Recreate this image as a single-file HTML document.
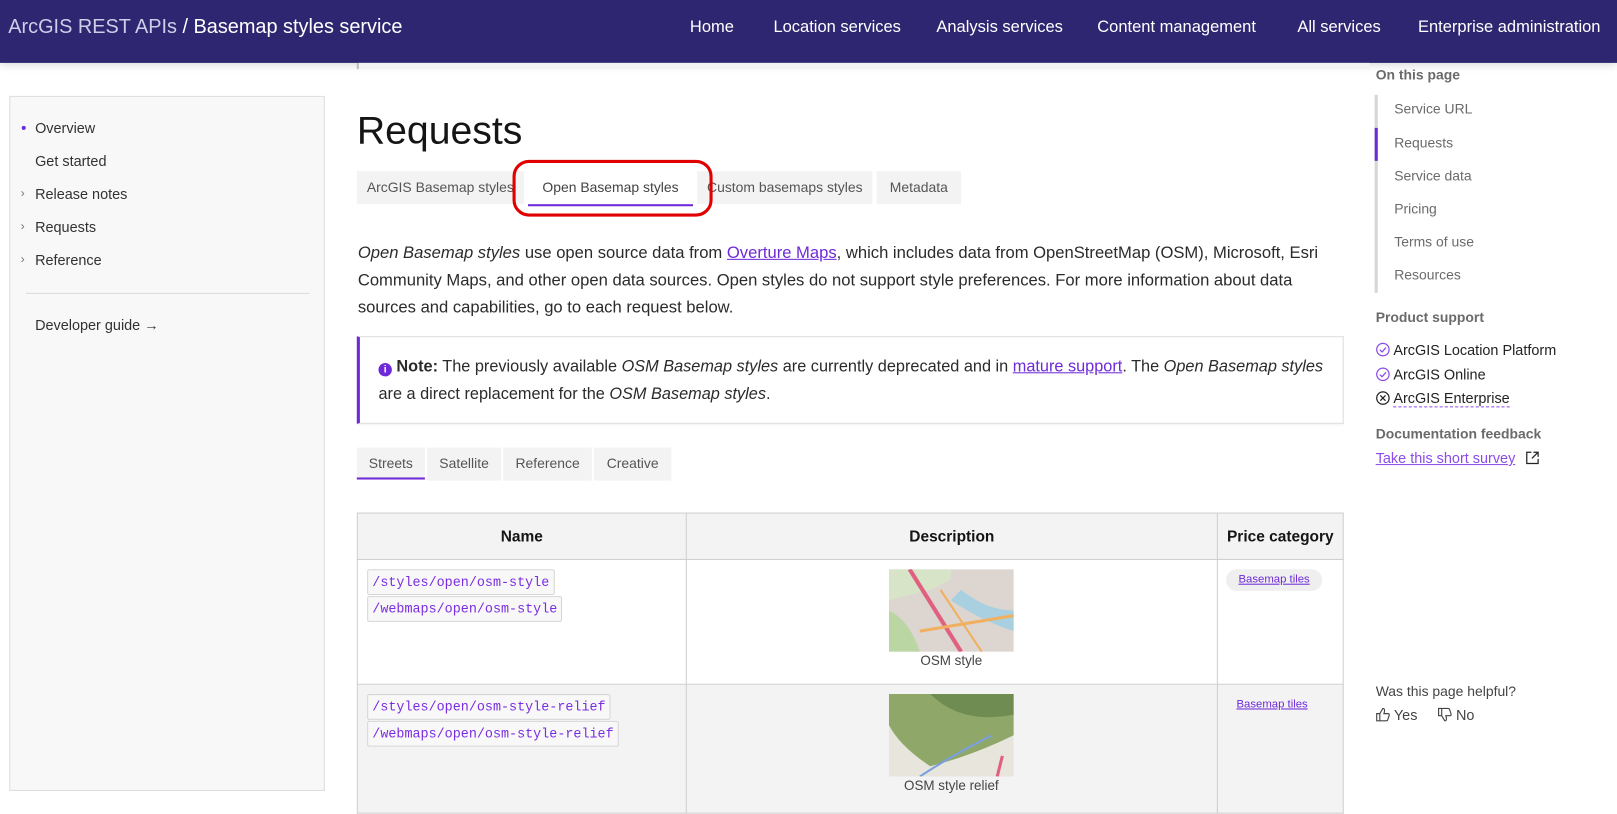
<!DOCTYPE html>
<html><head><meta charset="utf-8"><style>
*{box-sizing:border-box;margin:0;padding:0}
html,body{width:1617px;height:814px;overflow:hidden;background:#fff}
body{font-family:"Liberation Sans",sans-serif;color:#151515;position:relative}
#w{position:absolute;left:0;top:0;width:1568px;height:790px;transform:scale(1.03125);transform-origin:0 0}
.hdr{position:absolute;left:0;top:0;width:1568px;height:61px;background:#2e2670;color:#fff;box-shadow:0 2px 8px rgba(0,0,0,.15)}
.hdr .t{position:absolute;left:8px;top:16px;font-size:19.3px;color:#fff}
.hdr .t span{color:#d0cde8}
.nav{position:absolute;top:18px;font-size:16px;color:#fff}
.abs{position:absolute}
.side{position:absolute;left:9px;top:93px;width:306px;height:674px;background:#f8f8f8;border:1px solid #dedede}
.side div{position:absolute;left:24px;font-size:14px;color:#323232}
.car{position:absolute;left:-14px;color:#777;font-size:12px}
.tab{position:absolute;height:32px;background:#f3f3f3;font-size:13.5px;color:#555;text-align:center;line-height:32px}
p.b{font-size:16.1px;line-height:26.5px;color:#2b2b2b}
a{color:#6e2ad8;text-decoration:underline}
.rt{position:absolute;left:1352px;font-size:13.5px;color:#6a6a6a}
.code{position:absolute;font-family:"Liberation Mono",monospace;font-size:13px;color:#7a2de0;border:1px solid #d6d6d6;background:#f8f8f8;border-radius:2px;padding:0 4px;height:25px;line-height:24px}
table{border-collapse:collapse}
</style></head><body><div id="w">
<div class="hdr"><div class="t"><span>ArcGIS REST APIs</span> / Basemap styles service</div>
<div class="nav" style="left:669px">Home</div>
<div class="nav" style="left:750px">Location services</div>
<div class="nav" style="left:908px">Analysis services</div>
<div class="nav" style="left:1064px">Content management</div>
<div class="nav" style="left:1258px">All services</div>
<div class="nav" style="left:1375px">Enterprise administration</div>
</div>
<div class="abs" style="left:346px;top:61px;width:2px;height:6px;background:#bbb"></div>
<div class="abs" style="left:348px;top:61px;width:980px;height:6px;background:#f3f3f3"></div>

<div class="side">
<div style="top:22px"><span class="abs" style="left:-13px;top:6px;width:4px;height:4px;border-radius:2px;background:#6e2ad8"></span>Overview</div>
<div style="top:54px">Get started</div>
<div style="top:86px"><span class="car">›</span>Release notes</div>
<div style="top:118px"><span class="car">›</span>Requests</div>
<div style="top:150px"><span class="car">›</span>Reference</div>
<span class="abs" style="left:15px;top:190px;width:275px;height:1px;background:#dcdcdc"></span>
<div style="top:213px">Developer guide →</div>
</div>

<div class="abs" style="left:346px;top:106px;font-size:38px;color:#151515">Requests</div>
<div class="tab" style="left:346px;top:166px;width:162px">ArcGIS Basemap styles</div>
<div class="tab" style="left:512px;top:166px;width:160px;background:#fff;color:#444;border-bottom:2px solid #6e2ad8;height:34px">Open Basemap styles</div>
<div class="tab" style="left:676px;top:166px;width:170px">Custom basemaps styles</div>
<div class="tab" style="left:850px;top:166px;width:82px">Metadata</div>
<div class="abs" style="left:497px;top:155px;width:194px;height:55px;border:3.5px solid #e00000;border-radius:16px"></div>

<p class="b abs" style="left:347px;top:232px;width:960px"><i>Open Basemap styles</i> use open source data from <a>Overture Maps</a>, which includes data from OpenStreetMap (OSM), Microsoft, Esri Community Maps, and other open data sources. Open styles do not support style preferences. For more information about data sources and capabilities, go to each request below.</p>

<div class="abs" style="left:346px;top:326px;width:957px;height:85px;border:1px solid #dedede;border-left:3px solid #6e2ad8;box-shadow:0 1px 2px rgba(0,0,0,.06)">
<p class="b" style="position:absolute;left:18px;top:16px;width:930px;font-size:15.8px"><span style="display:inline-block;width:13px;height:13px;border-radius:7px;background:#6e2ad8;color:#fff;font-size:10px;line-height:13px;text-align:center;font-weight:bold;vertical-align:-1px">i</span> <b>Note:</b> The previously available <i>OSM Basemap styles</i> are currently deprecated and in <a>mature support</a>. The <i>Open Basemap styles</i> are a direct replacement for the <i>OSM Basemap styles</i>.</p>
</div>

<div class="tab" style="left:346px;top:434px;width:66px;border-bottom:2px solid #6e2ad8;height:31px">Streets</div>
<div class="tab" style="left:414px;top:434px;width:72px">Satellite</div>
<div class="tab" style="left:488px;top:434px;width:86px">Reference</div>
<div class="tab" style="left:576px;top:434px;width:75px">Creative</div>

<table class="abs" style="left:346px;top:497px;width:957px;font-size:14px">
<tr style="height:45px;background:#f3f3f3"><th style="border:1px solid #cfcfcf;width:319px;font-size:15px">Name</th><th style="border:1px solid #cfcfcf;width:515px;font-size:15px">Description</th><th style="border:1px solid #cfcfcf;font-size:15px">Price category</th></tr>
<tr style="height:121px"><td style="border:1px solid #cfcfcf"></td><td style="border:1px solid #cfcfcf"></td><td style="border:1px solid #cfcfcf"></td></tr>
<tr style="height:125px;background:#f3f3f3"><td style="border:1px solid #cfcfcf"></td><td style="border:1px solid #cfcfcf"></td><td style="border:1px solid #cfcfcf"></td></tr>
</table>
<div class="code" style="left:356px;top:552px">/styles/open/osm-style</div>
<div class="code" style="left:356px;top:578px">/webmaps/open/osm-style</div>
<div class="code" style="left:356px;top:673px">/styles/open/osm-style-relief</div>
<div class="code" style="left:356px;top:699px">/webmaps/open/osm-style-relief</div>
<svg class="abs" style="left:862px;top:552px" width="121" height="80"><rect width="121" height="80" fill="#ddd5cf"/><path d="M0 30 L40 20 L60 10 V0 H0Z" fill="#d7e4c8"/><path d="M0 40 Q20 50 30 80 H0Z" fill="#b9d6a3"/><path d="M60 30 Q90 50 121 60 V40 Q95 40 70 20Z" fill="#a9d0e0"/><path d="M20 0 L70 80" stroke="#e06080" stroke-width="4"/><path d="M30 60 L121 45" stroke="#f0b060" stroke-width="3"/><path d="M50 20 L90 80" stroke="#f0b060" stroke-width="2"/></svg>
<div class="abs" style="left:862px;top:633px;width:121px;text-align:center;font-size:13px;color:#444">OSM style</div>
<svg class="abs" style="left:862px;top:673px" width="121" height="80"><rect width="121" height="80" fill="#e8e6dc"/><path d="M0 0 H121 V40 Q80 60 40 70 Q10 50 0 30Z" fill="#8fa86a"/><path d="M40 0 Q70 30 121 20 V0Z" fill="#6f8c52"/><path d="M30 80 Q60 60 100 40" stroke="#7aa0e0" stroke-width="2" fill="none"/><path d="M110 60 L105 80" stroke="#e06080" stroke-width="3"/></svg>
<div class="abs" style="left:862px;top:754px;width:121px;text-align:center;font-size:13px;color:#444">OSM style relief</div>
<div class="abs" style="left:1189px;top:552px;width:93px;height:21px;border-radius:10px;background:#efefef;font-size:11px;line-height:21px;text-align:center"><a>Basemap tiles</a></div>
<div class="abs" style="left:1199px;top:677px;font-size:11px"><a>Basemap tiles</a></div>

<div class="abs" style="left:1334px;top:65px;font-size:13.5px;font-weight:bold;color:#6a6a6a">On this page</div>
<div class="abs" style="left:1333px;top:92px;width:3px;height:192px;background:#d6d6d6"></div>
<div class="abs" style="left:1333px;top:124px;width:3px;height:32px;background:#6e2ad8"></div>
<div class="rt" style="top:98px">Service URL</div>
<div class="rt" style="top:131px">Requests</div>
<div class="rt" style="top:163px">Service data</div>
<div class="rt" style="top:195px">Pricing</div>
<div class="rt" style="top:227px">Terms of use</div>
<div class="rt" style="top:259px">Resources</div>
<div class="abs" style="left:1334px;top:300px;font-size:13.5px;font-weight:bold;color:#6a6a6a">Product support</div>
<div class="abs" style="left:1334px;top:328px;font-size:14px;color:#222;line-height:23.5px">
<div><svg width="14" height="14" style="vertical-align:-2px"><circle cx="7" cy="7" r="6" fill="none" stroke="#8b4be8" stroke-width="1.2"/><path d="M4 7.2 L6.2 9.3 L10 5" fill="none" stroke="#8b4be8" stroke-width="1.2"/></svg> ArcGIS Location Platform</div>
<div><svg width="14" height="14" style="vertical-align:-2px"><circle cx="7" cy="7" r="6" fill="none" stroke="#8b4be8" stroke-width="1.2"/><path d="M4 7.2 L6.2 9.3 L10 5" fill="none" stroke="#8b4be8" stroke-width="1.2"/></svg> ArcGIS Online</div>
<div><svg width="14" height="14" style="vertical-align:-2px"><circle cx="7" cy="7" r="6" fill="none" stroke="#222" stroke-width="1.2"/><path d="M4.5 4.5 L9.5 9.5 M9.5 4.5 L4.5 9.5" stroke="#222" stroke-width="1.2"/></svg> <span style="border-bottom:1px dashed #8b4be8">ArcGIS Enterprise</span></div>
</div>
<div class="abs" style="left:1334px;top:413px;font-size:13.5px;font-weight:bold;color:#6a6a6a">Documentation feedback</div>
<div class="abs" style="left:1334px;top:436px;font-size:14px"><a style="color:#8b4be8">Take this short survey</a> <svg width="14" height="14" style="vertical-align:-2px;margin-left:6px"><path d="M6 1.5 H1.5 V12.5 H12.5 V8 M8 1.5 H12.5 V6 M12.5 1.5 L6.5 7.5" fill="none" stroke="#222" stroke-width="1.2"/></svg></div>
<div class="abs" style="left:1334px;top:663px;font-size:13.5px;color:#444">Was this page helpful?</div>
<div class="abs" style="left:1334px;top:685px;font-size:14px;color:#444"><svg width="14" height="14" style="vertical-align:-2px"><path d="M1 6 H4 V13 H1Z M4 6 L7 1 Q9 1 8.5 4 L8 6 H12.5 Q13.5 6.5 13 8 L11.5 12.5 Q11 13 10 13 H4" fill="none" stroke="#444" stroke-width="1.1"/></svg> Yes &nbsp;&nbsp;&nbsp; <svg width="14" height="14" style="vertical-align:-2px;transform:scale(1,-1)"><path d="M1 6 H4 V13 H1Z M4 6 L7 1 Q9 1 8.5 4 L8 6 H12.5 Q13.5 6.5 13 8 L11.5 12.5 Q11 13 10 13 H4" fill="none" stroke="#444" stroke-width="1.1"/></svg> No</div>
</div></body></html>
